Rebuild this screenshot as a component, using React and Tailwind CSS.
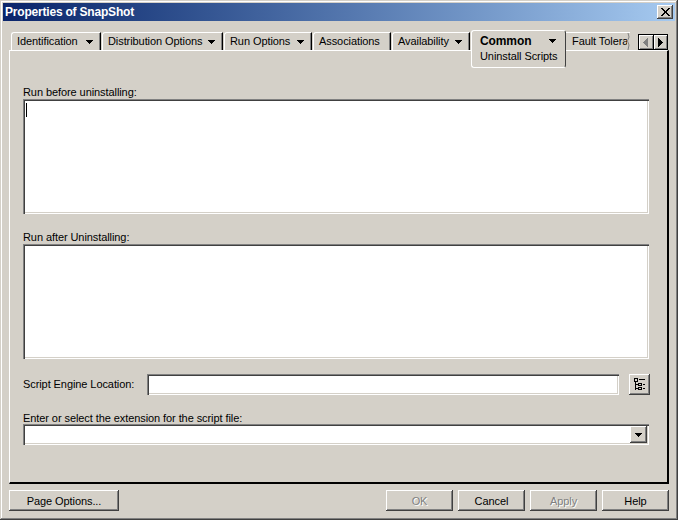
import React from "react";

const raised = "shadow-[inset_-1px_-1px_0_#404040,inset_1px_1px_0_#ffffff,inset_-2px_-2px_0_#808080]";
const sunken = "shadow-[inset_1px_1px_0_#808080,inset_2px_2px_0_#404040,inset_-1px_-1px_0_#ffffff,inset_-2px_-2px_0_#d4d0c8]";

function Arrow() {
  return (
    <svg width="7" height="4" viewBox="0 0 7 4" shapeRendering="crispEdges">
      <polygon points="0,0 7,0 4,4 3,4" fill="#000" />
    </svg>
  );
}

function Tab({ label, width, arrow }) {
  return (
    <div
      className={`${width} mt-[2px] h-[18px] flex items-center justify-between pl-[5px] pr-[7px] rounded-tl-[3px] border-t border-l border-white border-r border-r-black shadow-[inset_-1px_0_0_#808080]`}
    >
      <span>{label}</span>
      {arrow && <Arrow />}
    </div>
  );
}

function Button({ label, width, disabled }) {
  return (
    <button
      className={`${width} h-[21px] pt-[1px] flex items-center justify-center ${raised} ${
        disabled ? "text-[#808080] [text-shadow:1px_1px_0_#ffffff]" : "text-black"
      }`}
    >
      {label}
    </button>
  );
}

export default function App() {
  return (
    <div className="w-[678px] h-[520px] bg-[#d4d0c8] p-[3px] text-[11px] tracking-[-0.08px] text-black font-['Liberation_Sans',Arial,sans-serif] shadow-[inset_-1px_-1px_0_#404040,inset_1px_1px_0_#d4d0c8,inset_-2px_-2px_0_#808080,inset_2px_2px_0_#ffffff]">
      {/* Title bar */}
      <div className="h-[18px] flex items-center justify-between pl-[2px] pr-[2px] bg-gradient-to-r from-[#0a246a] to-[#a6caf0]">
        <span className="text-white font-bold text-[12px] tracking-[-0.2px]">Properties of SnapShot</span>
        <div className={`w-[16px] h-[14px] bg-[#d4d0c8] flex items-center justify-center ${raised}`}>
          <svg width="9" height="8" viewBox="0 0 9 8" shapeRendering="crispEdges">
            <path d="M0 0h2l2.500 3 2.500-3h2l-3.500 4 3.500 4h-2l-2.500-3-2.500 3h-2l3.500-4z" fill="#000" />
          </svg>
        </div>
      </div>

      {/* Tabs */}
      <div className="relative z-10 ml-[8px] mt-[9px] h-[20px] w-[658px] flex items-start">
        <Tab label="Identification" width="w-[90px] mr-[1px]" arrow />
        <Tab label="Distribution Options" width="w-[121px] mr-[1px]" arrow />
        <Tab label="Run Options" width="w-[88px] mr-[1px]" arrow />
        <Tab label="Associations" width="w-[78px] mr-[1px]" />
        <Tab label="Availability" width="w-[78px] mr-[1px]" arrow />
        {/* Active tab hangs over the panel */}
        <div className="w-[95px] h-[38px] shrink-0 bg-[#d4d0c8] rounded-[3px] border border-white border-r-[#404040] border-b-white pl-[8px] pr-[9px] pt-[3px] flex flex-col">
          <div className="flex items-center justify-between h-[14px]">
            <span className="font-bold text-[12px] tracking-[-0.1px]">Common</span>
            <Arrow />
          </div>
          <span className="whitespace-nowrap">Uninstall Scripts</span>
        </div>
        <div className="relative w-[64px] mt-[2px] h-[18px] border-t border-white pl-[6px] overflow-hidden whitespace-nowrap">
          <span className="leading-[17px]">Fault Tolera</span>
          <svg width="3" height="18" viewBox="0 0 3 18" className="absolute right-0 top-0 bg-[#d4d0c8]">
            <path d="M1 0 L2 4 L0.500 8 L2 12 L1 17" stroke="#808080" fill="none" />
          </svg>
        </div>
        <div className="ml-[8px] mt-[4px] w-[30px] h-[16px] flex border border-black bg-[#d4d0c8]">
          <div className="w-[15px] flex items-center justify-center border-r border-black shadow-[inset_1px_1px_0_#ffffff,inset_-1px_-1px_0_#808080]">
            <svg width="5" height="9" viewBox="0 0 5 9" shapeRendering="crispEdges">
              <polygon points="5,0 5,9 0,5 0,4" fill="#808080" />
            </svg>
          </div>
          <div className="w-[14px] flex items-center justify-center shadow-[inset_1px_1px_0_#ffffff,inset_-1px_-1px_0_#808080]">
            <svg width="5" height="9" viewBox="0 0 5 9" shapeRendering="crispEdges">
              <polygon points="0,0 0,9 5,5 5,4" fill="#000" />
            </svg>
          </div>
        </div>
      </div>

      {/* Panel */}
      <div className="ml-[6px] w-[660px] h-[434px] border-t border-l border-white border-r-2 border-b-2 border-r-black border-b-black pl-[13px] flex flex-col">
        <label className="mt-[34px] h-[14px] leading-[14px]">Run before uninstalling:</label>
        <div className={`w-[626px] h-[115px] bg-white relative ${sunken}`}>
          <div className="absolute left-[3px] top-[4px] w-[1px] h-[14px] bg-black" />
        </div>
        <label className="mt-[16px] h-[14px] leading-[14px]">Run after Uninstalling:</label>
        <div className={`w-[626px] h-[115px] bg-white ${sunken}`} />

        <div className="mt-[14px] h-[22px] flex items-center">
          <label className="w-[124px]">Script Engine Location:</label>
          <div className={`w-[472px] h-[21px] bg-white ${sunken}`} />
          <button className={`ml-[10px] w-[21px] h-[21px] flex items-center justify-center ${raised}`}>
            <svg width="11" height="13" viewBox="0 0 11 13" shapeRendering="crispEdges" fill="none" stroke="#000">
              <path d="M0.500 0.500h3v3h-3z" />
              <path d="M5 1.500h6" />
              <path d="M1.500 4v8" />
              <path d="M1.500 6.500h3M4.500 5.500h3v2h-3zM9 6.500h2" />
              <path d="M1.500 10.500h3M4.500 9.500h3v2h-3zM9 10.500h2" />
            </svg>
          </button>
        </div>

        <label className="mt-[16px] h-[13px] leading-[14px]">Enter or select the extension for the script file:</label>
        <div className={`w-[626px] h-[21px] bg-white flex justify-end items-center pr-[2px] ${sunken}`}>
          <div className={`w-[17px] h-[17px] bg-[#d4d0c8] flex items-center justify-center ${raised}`}>
            <Arrow />
          </div>
        </div>
      </div>

      {/* Footer buttons */}
      <div className="ml-[6px] mt-[6px] w-[660px] flex items-center">
        <Button label="Page Options..." width="w-[110px]" />
        <div className="ml-auto flex gap-[5px]">
          <Button label="OK" width="w-[67px]" disabled />
          <Button label="Cancel" width="w-[67px]" />
          <Button label="Apply" width="w-[67px]" disabled />
          <Button label="Help" width="w-[67px]" />
        </div>
      </div>
    </div>
  );
}
